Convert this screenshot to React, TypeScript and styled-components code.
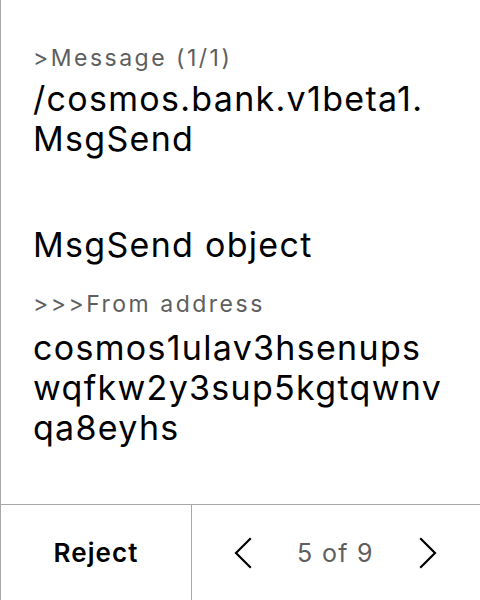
import React from "react";
import styled, { createGlobalStyle } from "styled-components";

const Global = createGlobalStyle`
  html, body { margin: 0; padding: 0; background: #fff; }
  body { font-family: Inter, "Noto Sans", sans-serif; -webkit-font-smoothing: antialiased; }
  * { box-sizing: border-box; }
`;

const Screen = styled.div`
  width: 480px;
  height: 600px;
  display: flex;
  flex-direction: column;
  border-left: 1px solid #a8a8a8;
  background: #fff;
  color: #000;
`;

const Content = styled.div`
  flex: 1;
  padding: 44px 35px 0 32px;
  display: flex;
  flex-direction: column;
`;

const Field = styled.div<{ $top?: number; $gap: number }>`
  display: flex;
  flex-direction: column;
  gap: ${(p) => p.$gap}px;
  margin-top: ${(p) => p.$top ?? 0}px;
`;

const Label = styled.div`
  font-size: 23px;
  line-height: 28px;
  letter-spacing: 2.5px;
  color: #5e5e5e;
`;

const Value = styled.div`
  font-size: 34px;
  line-height: 40px;
  letter-spacing: 1.3px;
  color: #000;
  word-break: break-all;
`;

const SectionTitle = styled.div<{ $top: number }>`
  font-size: 34px;
  line-height: 40px;
  letter-spacing: 1.3px;
  margin-top: ${(p) => p.$top}px;
`;

const Footer = styled.div`
  height: 96px;
  border-top: 1px solid #a8a8a8;
  display: grid;
  grid-template-columns: 191px 1fr;
`;

const RejectButton = styled.button`
  border: none;
  border-right: 1px solid #a8a8a8;
  background: transparent;
  font-family: inherit;
  font-size: 26px;
  font-weight: 600;
  letter-spacing: 1.1px;
  color: #000;
  padding: 0;
`;

const Pager = styled.div`
  display: flex;
  align-items: center;
  justify-content: space-between;
  padding: 0 42px 0 41px;
`;

const NavButton = styled.button`
  border: none;
  background: transparent;
  padding: 0;
  width: 20px;
  height: 32px;
  display: flex;
  align-items: center;
  justify-content: center;
`;

const PageText = styled.span`
  font-size: 25px;
  letter-spacing: 1.3px;
  color: #5e5e5e;
`;

const Chevron = ({ dir }: { dir: "left" | "right" }) => (
  <svg width="18" height="32" viewBox="0 0 18 32" fill="none">
    <path
      d={dir === "left" ? "M16 2 L2 16 L16 30" : "M2 2 L16 16 L2 30"}
      stroke="#000"
      strokeWidth="2.2"
      strokeLinecap="square"
    />
  </svg>
);

export default function App() {
  return (
    <>
      <Global />
      <Screen>
        <Content>
          <Field $gap={7}>
            <Label>&gt;Message (1/1)</Label>
            <Value>/cosmos.bank.v1beta1.MsgSend</Value>
          </Field>
          <SectionTitle $top={66}>MsgSend object</SectionTitle>
          <Field $top={25} $gap={10}>
            <Label>&gt;&gt;&gt;From address</Label>
            <Value>cosmos1ulav3hsenupswqfkw2y3sup5kgtqwnvqa8eyhs</Value>
          </Field>
        </Content>
        <Footer>
          <RejectButton>Reject</RejectButton>
          <Pager>
            <NavButton aria-label="Previous">
              <Chevron dir="left" />
            </NavButton>
            <PageText>5 of 9</PageText>
            <NavButton aria-label="Next">
              <Chevron dir="right" />
            </NavButton>
          </Pager>
        </Footer>
      </Screen>
    </>
  );
}
